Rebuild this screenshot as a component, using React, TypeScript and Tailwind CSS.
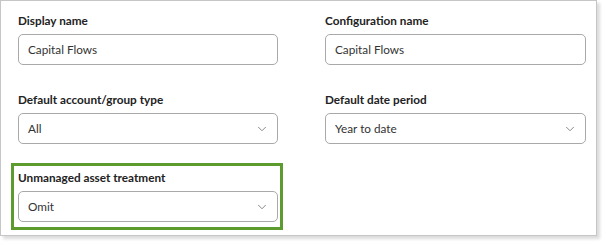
import { ChevronDown } from 'lucide-react';

interface FieldProps {
  label: string;
  value: string;
  select?: boolean;
}

function Field({ label, value, select = false }: FieldProps) {
  return (
    <div className="flex flex-col">
      <div className="h-[18px] text-[11.75px] leading-[18px] font-bold text-[#222]">{label}</div>
      <div className="mt-[4px] h-[31px] flex items-center justify-between rounded-[5px] border border-[#a9a9a9] bg-white pl-[9px] pr-[8px]">
        <span className="text-[11.75px] text-[#333]">{value}</span>
        {select && <ChevronDown className="h-[14px] w-[14px] text-[#777]" strokeWidth={1.5} />}
      </div>
    </div>
  );
}

export default function App() {
  return (
    <div className="w-[606px] h-[246px] bg-white font-['Lato','Noto_Sans',sans-serif]">
      <div className="w-[597px] h-[236px] border border-[#c6c6c6] bg-white shadow-[3px_3px_3px_rgba(0,0,0,0.14)] pl-[17px] pt-[11px]">
        <div className="grid grid-cols-[260px_261px] gap-x-[47px]">
          <Field label="Display name" value="Capital Flows" />
          <Field label="Configuration name" value="Capital Flows" />
        </div>
        <div className="grid grid-cols-[260px_261px] gap-x-[47px] mt-[26px]">
          <Field label="Default account/group type" value="All" select />
          <Field label="Default date period" value="Year to date" select />
        </div>
        <div className="grid grid-cols-[260px_261px] gap-x-[47px] mt-[19px]">
          <div className="-ml-[7px] -mr-[5px] border-[3px] border-[#5c9c2e] pl-[4px] pr-[2px] pt-[3px] pb-[5px]">
            <Field label="Unmanaged asset treatment" value="Omit" select />
          </div>
        </div>
      </div>
    </div>
  );
}
